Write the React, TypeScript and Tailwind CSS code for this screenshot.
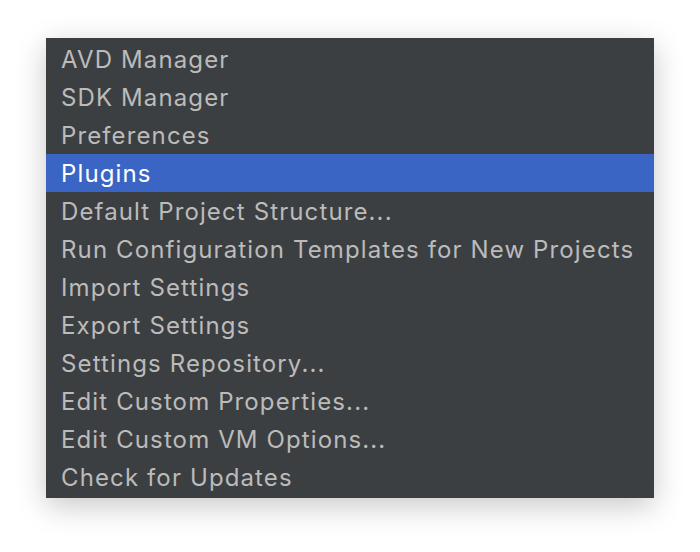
import React from 'react';

const items = [
  'AVD Manager',
  'SDK Manager',
  'Preferences',
  'Plugins',
  'Default Project Structure...',
  'Run Configuration Templates for New Projects',
  'Import Settings',
  'Export Settings',
  'Settings Repository...',
  'Edit Custom Properties...',
  'Edit Custom VM Options...',
  'Check for Updates',
];

const App: React.FC = () => {
  const selected = 'Plugins';

  return (
    <div className="w-[700px] h-[552px] bg-white pt-[38px] pl-[46px]" style={{ fontFamily: 'Inter, "Noto Sans", sans-serif' }}>
      <div className="w-[608px] bg-[#3c3f41] py-[2px] shadow-[0_8px_28px_rgba(0,0,0,0.22)]">
        {items.map(label => (
          <div
            key={label}
            className={`h-[38px] flex items-center pl-[15px] pt-[1px] text-[24px] tracking-[1.12px] ${
              label === selected ? 'bg-[#3a65c5] text-white' : 'text-[#bbbbbb]'
            }`}
          >
            {label}
          </div>
        ))}
      </div>
    </div>
  );
};

export default App;
